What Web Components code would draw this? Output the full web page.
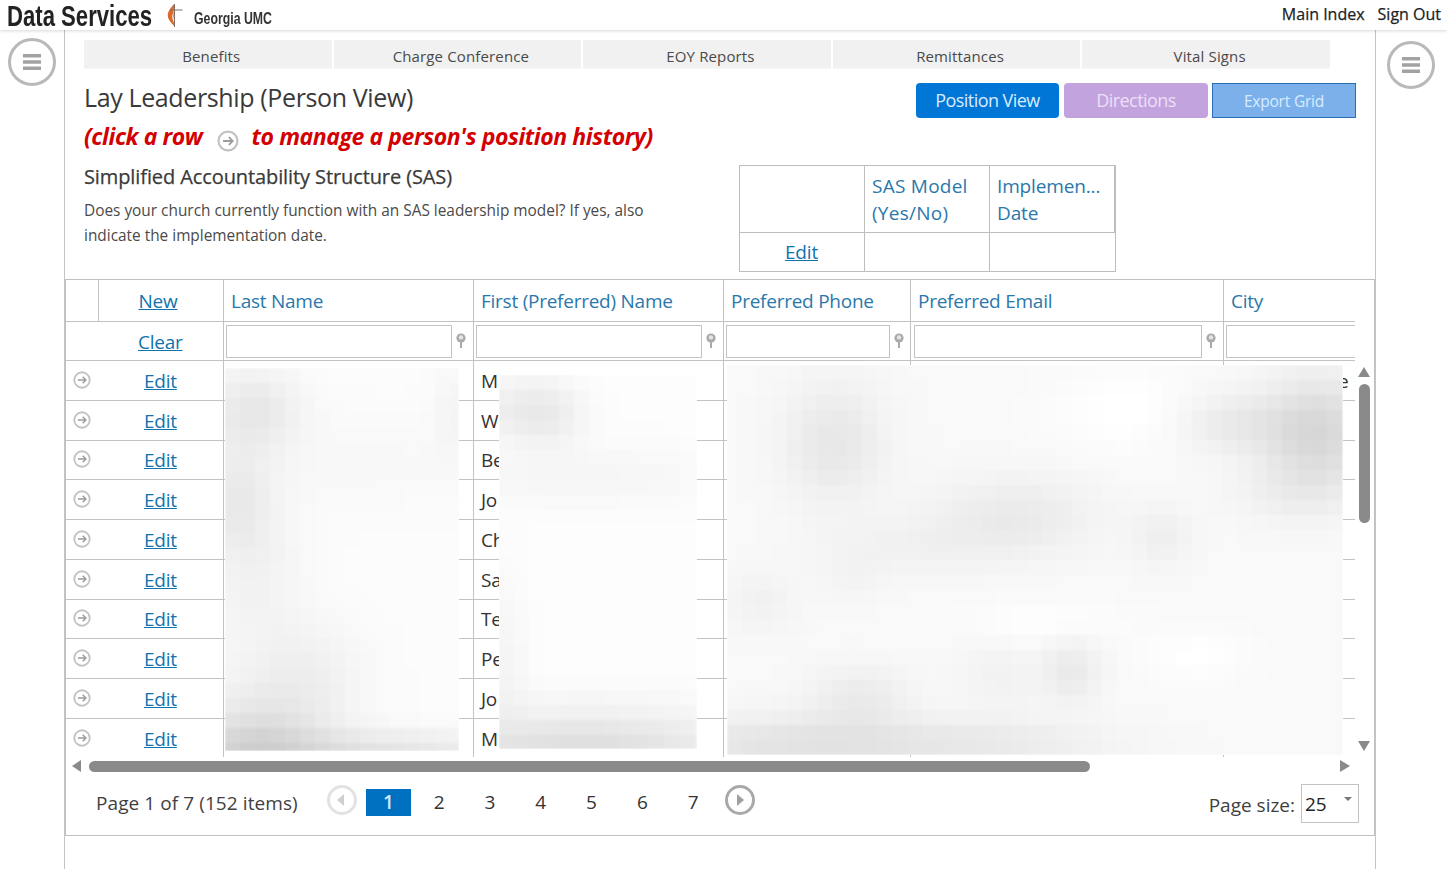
<!DOCTYPE html>
<html lang="en"><head><meta charset="utf-8"><title>Lay Leadership</title>
<style>
html,body{margin:0;height:100%;overflow:hidden;background:#fff}
body{font-family:"Open Sans","Noto Sans","Liberation Sans",sans-serif;color:#333}
</style></head><body>
<data-app></data-app>
<script>
const F='"Open Sans","Noto Sans","Liberation Sans",sans-serif';
function def(name,css,html,extra){
  class C extends HTMLElement{
    constructor(){super();this.attachShadow({mode:'open'}).innerHTML=`<style>${css}</style>${typeof html==='function'?html(this):html}`;}
    connectedCallback(){if(extra)extra(this);}
  }
  customElements.define(name,C);
}
const arrowSvg=s=>`<svg width="${s}" height="${s}" viewBox="0 0 20 20" style="display:block"><circle cx="10" cy="10" r="8.6" fill="#fff" stroke="#c2c2c2" stroke-width="2"/><path d="M5.5 10H14M10.8 6.5 14.3 10l-3.5 3.5" fill="none" stroke="#9b9b9b" stroke-width="1.6"/></svg>`;
const pin=`<svg width="12" height="16" viewBox="0 0 12 16" style="display:block"><circle cx="6" cy="5" r="4.6" fill="#a9a9a9"/><circle cx="6" cy="4.4" r="2.2" fill="#e4e4e4"/><rect x="5" y="8" width="2" height="7" fill="#a9a9a9"/></svg>`;

def('app-header',`:host{display:flex;height:30px;align-items:center;justify-content:space-between;box-shadow:0 1px 3px rgba(0,0,0,.16);position:relative;z-index:2;background:#fff}
.l{display:flex;align-items:center;height:30px}
.t{display:block;flex:none;width:183px;margin:0 -38px 0 7px;white-space:nowrap;font:700 28px/30px "Liberation Sans",sans-serif;color:#222;transform-origin:0 50%;transform:scale(.79,1.08);position:relative;top:1px}
svg{display:block;margin-left:15px}
.g{display:block;flex:none;width:108px;margin:0 -30px 0 11px;white-space:nowrap;font:700 17px/30px "Liberation Sans",sans-serif;color:#333;transform-origin:0 50%;transform:scaleX(.724);position:relative;top:4px}
.r{display:flex;gap:13px;padding-right:6px;font:400 16px/30px ${F};color:#222;-webkit-text-stroke:.25px #222;position:relative;top:-1px}`,
`<div class="l"><span class="t">Data Services</span>
<svg width="16" height="26" viewBox="0 0 16 26"><path d="M7 2C3 6.500 .5 10 .8 14c.3 3.800 3.500 6.800 6.200 10 1-3.500-1.200-5-1.600-8C5 12 7.800 7 7 2Z" fill="#dc6a2a"/><path d="M7.300 7c-1.500 3-1.800 6.500-.6 10l.6 2Z" fill="#eda06a"/><path d="M7.500 2V25M3.500 8H15.500" stroke="#7d6f66" stroke-width="1" fill="none"/></svg>
<span class="g">Georgia UMC</span></div>
<div class="r"><span>Main Index</span><span>Sign Out</span></div>`);

def('side-menu',`:host{display:block;flex:none;width:var(--w,64px);box-sizing:border-box;padding:var(--t,8px) 0 0 var(--l,8px)}
div{width:48px;height:48px;box-sizing:border-box;border:3px solid #b9b9b9;border-radius:50%;display:flex;align-items:center;justify-content:center}`,
`<div><svg width="18" height="16" viewBox="0 0 18 16"><path d="M0 0h18v3.400H0zM0 6.300h18v3.400H0zM0 12.600h18V16H0z" fill="#a2a2a2"/></svg></div>`);

def('nav-tabs',`:host{display:flex;gap:2px;margin:10px 0 0 19px;width:1246px}`,`<slot></slot>`);
def('nav-tab',`:host{display:block;flex:1;height:29px;background:#f1f1f1;border-bottom:1px solid #f7f7f7;box-sizing:border-box;text-align:center;padding-left:7px;font:400 15px/33px ${F};color:#4a4a4a;letter-spacing:.14px}`,`<slot></slot>`);

def('app-button',`:host{display:flex;box-sizing:border-box;width:var(--bw,144px);height:35px;align-items:center;justify-content:center;border-radius:var(--r,4px);background:var(--bg);color:var(--fg);border:var(--b,0);margin-left:var(--ml,0);padding:var(--pad,0 0 2px);font:400 var(--fs,18px)/1 ${F};letter-spacing:var(--ls,-.55px)}`,`<slot></slot>`);

def('page-title',`:host{display:block;padding:14px 19px 0;position:relative}
.top{display:flex;justify-content:space-between}
h1{margin:0;font:400 25px/28px ${F};color:#3a3a3a;letter-spacing:-.37px}
.b{display:flex;gap:5px}
.red{display:flex;align-items:center;height:30px;margin-top:3px;font:italic 700 23px/30px ${F};color:#d30000;letter-spacing:-.42px}
.red span.i{margin:10px 13px 0 14px}`,
`<div class="top"><h1>Lay Leadership (Person View)</h1><div class="b">
<app-button style="--bg:#0076d6;--fg:#d9ecff;--bw:143px">Position View</app-button>
<app-button style="--bg:#c3a3de;--fg:#ecdff7">Directions</app-button>
<app-button style="--bg:#7bb0ea;--fg:#d9ecff;--b:1px solid #2a6db0;--r:0;--fs:15.500px;--ls:-.2px;--ml:-1px;--pad:2px 0 0">Export Grid</app-button></div></div>
<div class="red"><span>(click a row</span><span class="i">${arrowSvg(22)}</span><span>to manage a person's position history)</span></div>`);

def('sas-section',`:host{display:flex;align-items:flex-start;padding:14px 0 0 19px;height:107px}
.t{width:655px;flex:none}
h2{margin:0;font:400 20px/24px ${F};color:#3a3a3a;letter-spacing:-.1px;-webkit-text-stroke:.25px #3a3a3a}
p{margin:9px 0 0;width:600px;font:400 15.400px/25px ${F};color:#4a4a4a}
.g{display:grid;grid-template-columns:125px 125px 126px;grid-template-rows:67px 39px;box-sizing:border-box;width:377px;height:107px;border-top:1px solid #bdbdbd;border-left:1px solid #bdbdbd}
.g div{box-sizing:border-box;border-right:1px solid #bdbdbd;border-bottom:1px solid #bdbdbd;font:400 19px/27px ${F};color:#2a78ab;padding:7px 0 0 7px}
.g div:nth-child(2){letter-spacing:.25px}
.g div:nth-child(3){border-right-width:2px;letter-spacing:-.15px}
.g a{display:block;text-align:center;color:#1173ae;text-decoration:underline;padding:0;letter-spacing:-.2px;margin-left:-1px}
.g .e{padding:6px 0 0}`,
`<div class="t"><h2>Simplified Accountability Structure (SAS)</h2><p>Does your church currently function with an SAS leadership model? If yes, also indicate the implementation date.</p></div>
<div class="g"><div></div><div>SAS Model<br>(Yes/No)</div><div>Implemen...<br>Date</div><div class="e"><a>Edit</a></div><div></div><div></div></div>`);

def('blur-patch',`:host{display:block;position:absolute;overflow:hidden;background:#fff;left:var(--x);top:var(--y);width:var(--pw);height:var(--ph)}
svg{display:block;filter:blur(1px)}`,`<svg></svg>`,el=>{
  const w=+el.getAttribute('w'),h=+el.getAttribute('h'),c=15,base=+el.getAttribute('base');
  const blobs=JSON.parse(el.getAttribute('blobs'));let s='';
  for(let y=-15;y<h+15;y+=c)for(let x=-15;x<w+15;x+=c){
    let v=255-base;const px=x+c/2,py=y+c/2;
    for(const b of blobs)v-=b[4]*Math.exp(-Math.pow((px-b[0])/b[2],2)-Math.pow((py-b[1])/b[3],2));
    v=Math.max(200,Math.min(255,Math.round(v)));
    s+=`<rect x="${x}" y="${y}" width="${c+.5}" height="${c+.5}" fill="rgb(${v},${v},${v})"/>`;
  }
  const svg=el.shadowRoot.querySelector('svg');
  svg.setAttribute('width',w);svg.setAttribute('height',h);svg.setAttribute('viewBox',`0 0 ${w} ${h}`);svg.innerHTML=s;
});

const names=['M','W','Be','Jo','Ch','Sa','Te','Pe','Jo','M'];
const inp=(w,p)=>`<div class="f" style="padding-left:${p||2}px"><i style="width:${w}px"></i><b>${pin}</b></div>`;
def('lay-grid',`:host{display:block;box-sizing:border-box;width:1310px;height:557px;margin-top:7px;border:1px solid #c0c0c0;position:relative}
.wrap{display:flex}
.tbl{width:1289px;flex:none;overflow:hidden}
.row{display:grid;grid-template-columns:33px 125px 250px 250px 187px 313px 131px;box-sizing:border-box;border-bottom:1px solid #c3c3c3;font:400 19px/1 ${F};letter-spacing:-.25px}
.row>div{box-sizing:border-box;border-right:1px solid #c3c3c3;display:flex;align-items:center;white-space:nowrap;overflow:hidden;padding-top:2px}
.row>div:last-child{border-right:0}
.h{height:42px}.h>div{color:#2a78ab;padding-left:7px}
.fr{height:39px}
.fr>div{padding-top:0}
.d{height:39.750px;color:#333}
.d:last-child{border-bottom:0;height:38.500px}
.lead{grid-column:span 2}
a{color:#1173ae;text-decoration:underline}
.h .c{justify-content:center;padding:2px 6px 0 0}
.fr .lead{padding:2px 0 0 72px}
.d .lead{padding-left:7px}
.d .lead svg{margin-top:-3px}
.d .lead a{margin-left:53px}
.d .txt{padding-left:7px}
.f{display:flex;align-items:center;width:100%}
.f i{display:block;height:33px;box-sizing:border-box;border:1px solid #c3c3c3;background:#fff;flex:none}
.f b{display:block;margin-left:3px}
.v{width:19px;flex:none;box-sizing:border-box;padding:87px 0 0 3px}
.v .u,.v .dn{width:0;height:0;border:solid transparent;border-width:0 6.500px 10px;border-bottom-color:#8a8a8a}
.v .dn{border-width:10px 6.500px 0;border-top-color:#8a8a8a;margin-top:218px}
.v .th{width:11px;height:139px;background:#8a8a8a;border-radius:5.500px;margin:7px 0 0 1px}
.hs{display:flex;align-items:center;height:18px;padding:0 24px 0 6px;box-sizing:border-box}
.hs .a{width:0;height:0;border:solid transparent;border-width:6px 9px 6px 0;border-right-color:#8a8a8a}
.hs .t{width:1001px;height:11px;border-radius:5.500px;background:#8a8a8a;margin-left:8px}
.hs .b{width:0;height:0;border:solid transparent;border-width:6px 0 6px 10px;border-left-color:#8a8a8a;margin-left:auto}`,
()=>`<div class="wrap"><div class="tbl">
<div class="row h"><div style="padding:0"></div><div class="c"><a>New</a></div><div>Last Name</div><div>First (Preferred) Name</div><div>Preferred Phone</div><div>Preferred Email</div><div>City</div></div>
<div class="row fr"><div class="lead"><a>Clear</a></div><div>${inp(226)}</div><div>${inp(226)}</div><div>${inp(164)}</div><div>${inp(288,3)}</div><div><div class="f" style="padding-left:2px"><i style="width:140px"></i></div></div></div>
${names.map((n,i)=>`<div class="row d"><div class="lead">${arrowSvg(18)}<a>Edit</a></div><div></div><div class="txt">${n}</div><div></div><div></div><div class="txt" style="padding-left:114px">${i===0?'e':''}</div></div>`).join('')}
</div><div class="v"><div class="u"></div><div class="th"></div><div class="dn"></div></div></div>
<div class="hs"><div class="a"></div><div class="t"></div><div class="b"></div></div>
<grid-pager></grid-pager>
<blur-patch style="--x:159px;--y:88px;--pw:234px;--ph:383px" w="234" h="383" base="3" blobs='[[28,42,45,40,20],[12,132,30,50,14],[28,200,50,90,10],[229,42,20,40,7],[140,95,150,50,4],[28,372,70,45,28],[120,385,190,22,24],[80,310,60,55,12]]'></blur-patch>
<blur-patch style="--x:433px;--y:95px;--pw:198px;--ph:374px" w="198" h="374" base="2" blobs='[[25,35,50,32,17],[54,42,30,30,7],[88,102,150,32,7],[8,285,20,80,8],[88,368,150,22,28],[88,335,150,25,8]]'></blur-patch>
<blur-patch style="--x:661px;--y:85px;--pw:616px;--ph:390px" w="616" h="390" base="6" blobs='[[107,78,50,60,18],[590,68,55,55,34],[503,58,55,30,14],[565,128,60,30,8],[287,152,80,40,15],[434,172,30,30,10],[177,182,90,30,7],[124,215,30,25,5],[34,238,35,30,8],[344,305,30,35,15],[271,312,40,40,7],[132,332,50,30,14],[75,378,170,28,22],[279,378,120,20,10],[400,45,70,40,-7],[320,260,70,25,-6],[470,290,50,25,-6]]'></blur-patch>`);

def('grid-pager',`:host{display:flex;align-items:center;height:60px;padding-left:30px;font:400 19px/1 ${F};color:#3f3f3f;letter-spacing:-.27px;position:relative}
.lbl{letter-spacing:.08px;position:relative;top:-2px}
.c{width:30px;height:30px;box-sizing:border-box;border-radius:50%;display:flex;align-items:center;justify-content:center;flex:none;position:relative;top:-5px}
.c.p{border:3px solid #e2e2e2;margin-left:29px}
.c.n{border:3px solid #a9a9a9;margin-left:9px}
.c.p s{border:solid transparent;border-width:6px 7px 6px 0;border-right-color:#d0d0d0;margin-right:2px}
.c.n s{border:solid transparent;border-width:6px 0 6px 7px;border-left-color:#a0a0a0;margin-left:2px}
.pg{display:flex;gap:5.800px;margin-left:9px;position:relative;top:-2.500px}
.pg span{width:45px;height:27px;line-height:27px;text-align:center;color:#333}
.pg .on{background:#0070c0;color:#cfe8ff;font-weight:600}
.sz{margin-left:auto;display:flex;align-items:center;margin-right:15px;letter-spacing:0}
.sel{width:58px;height:39px;box-sizing:border-box;border:1px solid #c3c3c3;margin-left:6px;position:relative;color:#222;line-height:39px;padding-left:3px;top:-2px;display:block}
.sel u{position:absolute;right:6px;top:12px;border:solid transparent;border-width:4px 4px 0;border-top-color:#777}`,
`<span class="lbl">Page 1 of 7 (152 items)</span><div class="c p"><s></s></div>
<div class="pg"><span class="on">1</span><span>2</span><span>3</span><span>4</span><span>5</span><span>6</span><span>7</span></div>
<div class="c n"><s></s></div>
<div class="sz"><span>Page size:</span><span class="sel">25<u></u></span></div>`);

def('data-app',`:host{display:block;height:869px;overflow:hidden}
.shell{display:flex;height:839px}
main{display:block;flex:none;width:1312px;box-sizing:border-box;border-left:1px solid #c4c4c4;border-right:1px solid #c4c4c4}`,
`<app-header></app-header>
<div class="shell"><side-menu></side-menu>
<main><nav-tabs><nav-tab>Benefits</nav-tab><nav-tab>Charge Conference</nav-tab><nav-tab>EOY Reports</nav-tab><nav-tab>Remittances</nav-tab><nav-tab>Vital Signs</nav-tab></nav-tabs>
<page-title></page-title><sas-section></sas-section><lay-grid></lay-grid></main>
<side-menu style="--w:71px;--t:11px;--l:11px"></side-menu></div>`);
</script>
</body></html>
